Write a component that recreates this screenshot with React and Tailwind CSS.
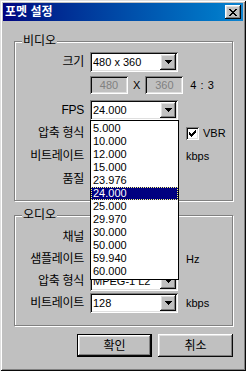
import React from 'react';

const fpsList = ['5.000', '10.000', '12.000', '15.000', '23.976', '24.000', '25.000', '29.970', '30.000', '50.000', '59.940', '60.000'];

const raised = 'shadow-[inset_-1px_-1px_0_#0a0a0a,inset_1px_1px_0_#ffffff,inset_-2px_-2px_0_#808080,inset_2px_2px_0_#dfdfdf]';
const sunken = 'shadow-[inset_1px_1px_0_#808080,inset_-1px_-1px_0_#ffffff,inset_2px_2px_0_#0a0a0a,inset_-2px_-2px_0_#dfdfdf]';

const DropButton = () => (
  <div className={`flex h-[16px] w-[16px] shrink-0 items-center justify-center bg-[#c0c0c0] ${raised}`}>
    <svg width="7" height="4" viewBox="0 0 7 4" shapeRendering="crispEdges">
      <path d="M0 0h7v1h-1v1h-1v1h-1v1h-1v-1h-1v-1h-1v-1h-1z" fill="#000" />
    </svg>
  </div>
);

// combos hidden behind the open list keep no text
const Combo = ({ value = '' }) => (
  <div className={`flex h-[20px] w-[88px] items-center bg-white pl-[3px] pr-[2px] ${sunken}`}>
    <span className="flex-1 truncate text-[11px] leading-[14px]">{value}</span>
    <DropButton />
  </div>
);

const Row = ({ label, children, className = '' }) => (
  <div className={`flex h-[20px] items-center ${className}`}>
    <div className="w-[70px] pr-[1px] text-right text-[12px] leading-[20px] tracking-[-0.3px]">{label}</div>
    <div className="ml-[5px] flex items-center">{children}</div>
  </div>
);

const Unit = ({ children }) => (
  <span className="ml-[8px] text-[11px] leading-[14px]">{children}</span>
);

const Group = ({ title, children, className = '' }) => (
  <div className={`relative border border-[#808080] shadow-[inset_1px_1px_0_#ffffff,1px_1px_0_#ffffff] ${className}`}>
    <span className="absolute left-[7px] top-[-9px] bg-[#c0c0c0] px-[1px] text-[12px] leading-[16px]">{title}</span>
    {children}
  </div>
);

const FpsList = () => (
  <div className="absolute left-0 top-[20px] z-10 w-[89px] border border-black bg-white py-[1px]">
    {fpsList.map((v) => (
      <div
        key={v}
        className={
          v === '24.000'
            ? 'flex h-[13px] items-center border border-dotted border-[#ffff80] bg-[#000080] pl-[1px] text-[11px] leading-[11px] text-white'
            : 'flex h-[13px] items-center border border-transparent pl-[1px] text-[11px] leading-[11px] text-black'
        }
      >
        {v}
      </div>
    ))}
  </div>
);

export default function App() {
  return (
    <div className="h-[371px] w-[246px] bg-[#c0c0c0] p-[3px] font-['Liberation_Sans','Noto_Sans_CJK_KR',sans-serif] text-black shadow-[inset_1px_1px_0_#dfdfdf,inset_-1px_-1px_0_#0a0a0a,inset_2px_2px_0_#ffffff,inset_-2px_-2px_0_#808080]">
      <div className="flex h-[18px] items-center justify-between bg-linear-to-r from-[#000080] to-[#1084d0] pl-[2px] pr-[2px]">
        <span className="text-[12px] font-bold leading-[14px] text-white">포멧 설정</span>
        <div className={`flex h-[14px] w-[16px] items-center justify-center bg-[#c0c0c0] ${raised}`}>
          <svg width="8" height="7" viewBox="0 0 8 7" shapeRendering="crispEdges">
            <path d="M0 0h2v1h1v1h2v-1h1v-1h2v1h-1v1h-1v1h-1v1h1v1h1v1h1v1h-2v-1h-1v-1h-2v1h-1v1h-2v-1h1v-1h1v-1h1v-1h-1v-1h-1v-1h-1z" fill="#000" />
          </svg>
        </div>
      </div>

      <div className="flex flex-col pl-[11px] pr-[10px] pt-[20px]">
        <Group title="비디오" className="pb-[11px] pt-[10px]">
          <Row label="크기">
            <Combo value="480 x 360" />
          </Row>
          <div className="ml-[75px] mt-[4px] flex h-[18px] items-center">
            <div className={`flex h-[18px] w-[38px] items-center justify-center bg-[#c0c0c0] text-[11px] text-[#808080] ${sunken}`}>480</div>
            <span className="mx-[5px] text-[11px]">X</span>
            <div className={`flex h-[18px] w-[38px] items-center justify-center bg-[#c0c0c0] text-[11px] text-[#808080] ${sunken}`}>360</div>
            <span className="ml-[7px] text-[11px] tracking-[0.5px]">4 : 3</span>
          </div>
          <Row label="FPS" className="mt-[6px]">
            <div className="relative">
              <Combo value="24.000" />
              <FpsList />
            </div>
          </Row>
          <Row label="압축 형식" className="mt-[3px]">
            <Combo />
            <div className={`ml-[8px] flex h-[13px] w-[13px] items-center justify-center bg-white ${sunken}`}>
              <svg width="7" height="7" viewBox="0 0 7 7" shapeRendering="crispEdges">
                <path d="M6 0h1v3h-1v1h-1v1h-1v1h-1v1h-1v-1h-1v-1h-1v-3h1v1h1v1h1v-1h1v-1h1z" fill="#000" />
              </svg>
            </div>
            <span className="ml-[4px] text-[11px]">VBR</span>
          </Row>
          <Row label="비트레이트" className="mt-[3px]">
            <Combo />
            <Unit>kbps</Unit>
          </Row>
          <Row label="품질" className="mt-[3px]">
            <Combo />
          </Row>
        </Group>

        <Group title="오디오" className="mt-[14px] pb-[12px] pt-[11px]">
          <Row label="채널">
            <Combo />
          </Row>
          <Row label="샘플레이트" className="mt-[2px]">
            <Combo />
            <Unit>Hz</Unit>
          </Row>
          <Row label="압축 형식" className="mt-[2px]">
            <Combo value="MPEG-1 L2" />
          </Row>
          <Row label="비트레이트" className="mt-[2px]">
            <Combo value="128" />
            <Unit>kbps</Unit>
          </Row>
        </Group>

        <div className="mt-[8px] flex justify-end gap-[6px]">
          <button className="h-[23px] w-[75px] border border-black bg-[#c0c0c0] p-0">
            <div className={`flex h-full w-full items-center justify-center text-[12px] ${raised}`}>확인</div>
          </button>
          <button className={`flex h-[23px] w-[75px] items-center justify-center bg-[#c0c0c0] text-[12px] ${raised}`}>취소</button>
        </div>
      </div>
    </div>
  );
}
